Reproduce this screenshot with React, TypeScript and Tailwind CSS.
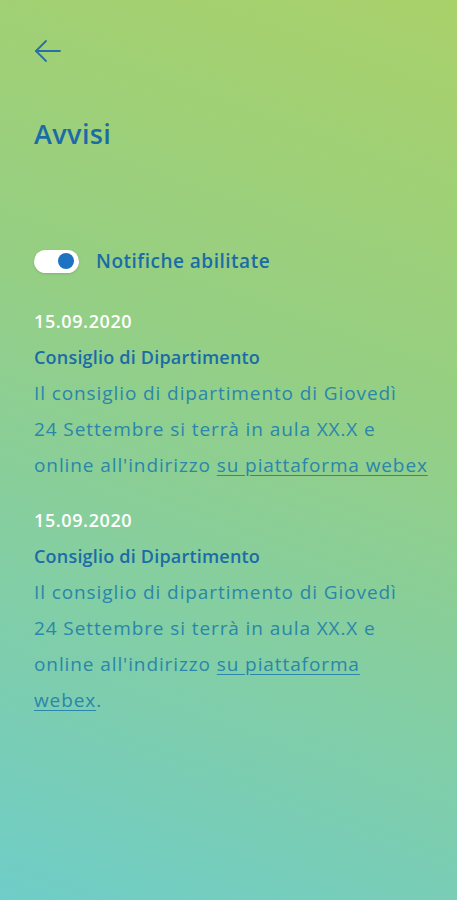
import React, { useState } from 'react';

type Notice = {
  date: string;
  title: string;
  lines: string[];
  link: string[];
  tail?: string;
};

const notices: Notice[] = [
  {
    date: '15.09.2020',
    title: 'Consiglio di Dipartimento',
    lines: ['Il consiglio di dipartimento di Giovedì', '24 Settembre si terrà in aula XX.X e', "online all'indirizzo "],
    link: ['su piattaforma webex'],
  },
  {
    date: '15.09.2020',
    title: 'Consiglio di Dipartimento',
    lines: ['Il consiglio di dipartimento di Giovedì', '24 Settembre si terrà in aula XX.X e', "online all'indirizzo "],
    link: ['su piattaforma', 'webex'],
    tail: '.',
  },
];

export default function App() {
  const [enabled, setEnabled] = useState(true);

  return (
    <div className="min-h-[900px] w-full bg-[linear-gradient(200deg,#a9d16a_0%,#95cf84_40%,#6fcdc8_100%)] font-['Open_Sans','Noto_Sans',sans-serif]">
      <div className="px-[34px] pt-[38px]">
        {/* Back */}
        <button className="block text-[#2a6fa3]" aria-label="Indietro">
          <svg width="28" height="26" viewBox="0 0 28 26" fill="none" stroke="currentColor" strokeWidth="1.8" strokeLinecap="round" strokeLinejoin="round">
            <path d="M26 13H2" />
            <path d="M12 3L2 13l10 10" />
          </svg>
        </button>

        <h1 className="mt-[53px] text-[27px] font-semibold leading-[34px] tracking-[0.4px] text-[#1b6ba8]">Avvisi</h1>

        {/* Toggle */}
        <div className="mt-[96px] flex items-center gap-[17px]">
          <button
            onClick={() => setEnabled(!enabled)}
            className="relative h-[23px] w-[45px] rounded-full bg-white shadow-sm"
            aria-pressed={enabled}
          >
            <span className={`absolute top-[3.5px] h-[16px] w-[16px] rounded-full bg-[#1d72c2] ${enabled ? 'left-[24px]' : 'left-[4px]'}`} />
          </button>
          <span className="text-[19px] font-semibold tracking-[0.5px] text-[#1b6ba8]">Notifiche abilitate</span>
        </div>

        {/* List */}
        <div className="mt-[27px] flex flex-col gap-[19px]">
          {notices.map((n, i) => (
            <div key={i} className="leading-[36px]">
              <p className="text-[18px] font-semibold tracking-[0.6px] text-white">{n.date}</p>
              <p className="text-[18px] font-semibold tracking-[0.2px] text-[#1b6ba8]">{n.title}</p>
              <p className="whitespace-nowrap text-[19px] tracking-[0.9px] text-[#2a86aa]">
                {n.lines[0]}
                <br />
                {n.lines[1]}
                <br />
                {n.lines[2]}
                <a href="#" className="underline underline-offset-[3px]">{n.link[0]}</a>
                {n.link[1] && (
                  <>
                    <br />
                    <a href="#" className="underline underline-offset-[3px]">{n.link[1]}</a>
                  </>
                )}
                {n.tail}
              </p>
            </div>
          ))}
        </div>
      </div>
    </div>
  );
}
